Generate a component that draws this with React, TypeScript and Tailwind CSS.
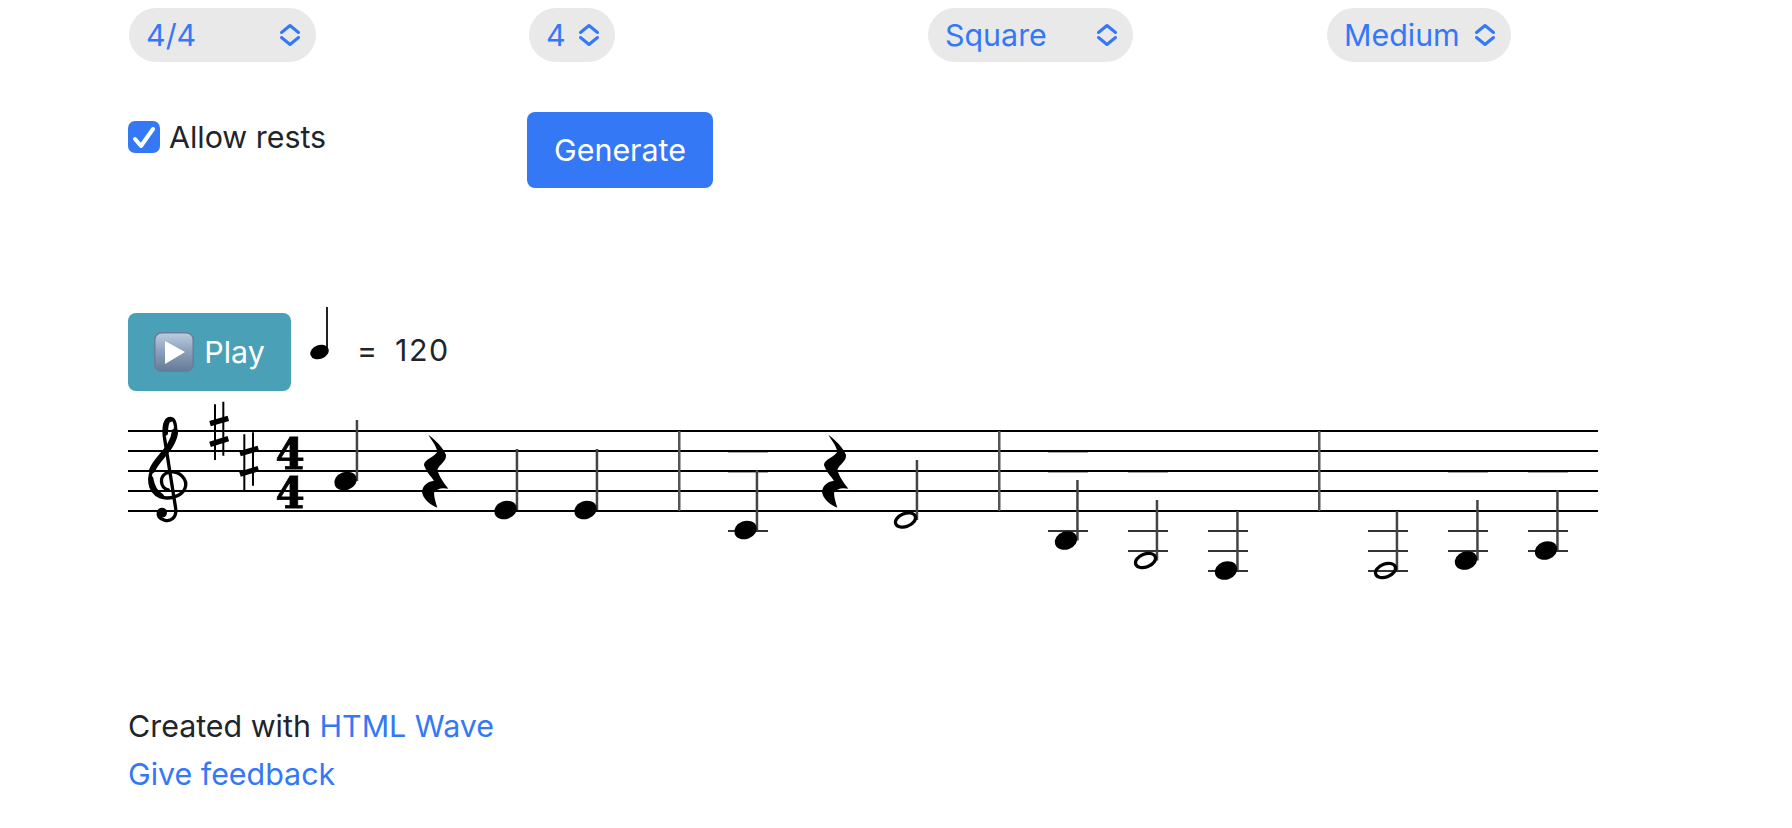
import React from "react";

const staffLines = [431, 451, 471, 491, 511];
const barLines = [679, 999, 1319];

type Note = {
  x: number;
  y: number;
  stemTop: number;
  hollow?: boolean;
  ledgerX?: number;
  ledgers?: number[];
};

const notes: Note[] = [
  { x: 345.5, y: 481, stemTop: 420 },
  { x: 505.5, y: 510, stemTop: 449 },
  { x: 585.5, y: 510, stemTop: 449 },
  { x: 745.5, y: 530, stemTop: 470, ledgerX: 728, ledgers: [452, 472, 491, 511, 531] },
  { x: 905.5, y: 520, stemTop: 460, hollow: true },
  { x: 1066, y: 540.5, stemTop: 480, ledgerX: 1048, ledgers: [452, 472, 491, 511, 531] },
  { x: 1145.5, y: 560.5, stemTop: 500, hollow: true, ledgerX: 1128, ledgers: [472, 491, 511, 531, 551] },
  { x: 1226, y: 570.5, stemTop: 511, ledgerX: 1208, ledgers: [491, 511, 531, 551, 571] },
  { x: 1385.5, y: 570.5, stemTop: 511, hollow: true, ledgerX: 1368, ledgers: [491, 511, 531, 551, 571] },
  { x: 1466, y: 560.5, stemTop: 500, ledgerX: 1448, ledgers: [472, 491, 511, 531, 551] },
  { x: 1546, y: 550.5, stemTop: 490, ledgerX: 1528, ledgers: [472, 491, 511, 531, 551] },
];

const restPath =
  "M205 74 C225 90 250 112 258 135 C260 155 238 162 232 180 C238 200 252 220 265 236 C245 232 230 236 222 248 C222 262 228 280 232 293 C210 285 188 265 186 245 C188 225 205 214 222 212 C214 200 200 188 192 165 C192 148 222 142 232 125 C228 105 214 90 205 74 Z";

function Chevrons() {
  return (
    <svg width="22" height="24" viewBox="0 0 22 24" fill="none" className="shrink-0">
      <path
        d="M2.5 9.5 L11 2.5 L19.5 9.5 M2.5 14.5 L11 21.5 L19.5 14.5"
        stroke="#3478f6"
        strokeWidth="3"
        strokeLinecap="round"
        strokeLinejoin="round"
      />
    </svg>
  );
}

function Select({ label, width }: { label: string; width: string }) {
  return (
    <button
      type="button"
      className={`flex h-[54px] items-center justify-between rounded-[27px] bg-[#e9e9e9] pl-[17px] pr-[15px] text-[30.4px] text-[#3478f6] ${width}`}
    >
      <span className="pt-[2px]">{label}</span>
      <Chevrons />
    </button>
  );
}

function PlayEmoji() {
  return (
    <svg width="40" height="40" viewBox="0 0 40 40" className="shrink-0">
      <defs>
        <linearGradient id="playBg" x1="0" y1="0" x2="0" y2="1">
          <stop offset="0" stopColor="#bccde0" />
          <stop offset="0.5" stopColor="#8a9fb9" />
          <stop offset="1" stopColor="#647a96" />
        </linearGradient>
      </defs>
      <rect x="0.75" y="0.75" width="38.5" height="38.5" rx="7" fill="url(#playBg)" stroke="#6a7d96" strokeWidth="1.5" />
      <path d="M11 9 L31 20 L11 32 Z" fill="#fff" strokeLinejoin="round" />
    </svg>
  );
}

function Score() {
  return (
    <svg width="1472" height="205" viewBox="128 395 1472 205" className="block">
      <defs>
        <filter id="soft" x="-10%" y="-10%" width="120%" height="120%">
          <feGaussianBlur stdDeviation="0.6" />
        </filter>
      </defs>

      {/* ledger lines sit under the staff */}
      {notes.map((n) =>
        (n.ledgers || []).map((y) => (
          <rect
            key={`${n.x}-${y}`}
            x={n.ledgerX}
            y={y - 1}
            width="40"
            height="2"
            fill={y > 520 ? "#333" : "#aaa"}
          />
        ))
      )}

      {staffLines.map((y) => (
        <rect key={y} x="128" y={y - 1} width="1470" height="2" fill="#000" />
      ))}
      {barLines.map((x) => (
        <rect key={x} x={x - 1} y="431" width="2.5" height="80" fill="#555" />
      ))}

      {notes.map((n) => (
        <rect key={n.x} x={n.x + 10.2} y={n.stemTop} width="2.5" height={n.y - n.stemTop} fill="#444" />
      ))}

      <g filter="url(#soft)">
        {/* treble clef */}
        <g transform="translate(125 395) scale(0.3333)" fill="none" stroke="#000" strokeLinecap="round">
          <path
            d="M130 285 C105 280 100 240 130 232 C165 225 190 255 180 280 C170 305 130 315 105 305 C70 290 65 245 90 210 C110 180 152 150 152 105 C152 80 145 70 135 70 C120 70 115 95 118 125 L152 340 C156 370 135 380 120 376 C105 372 97 365 100 352"
            strokeWidth="10"
          />
          <path d="M82 225 C95 190 145 160 150 110" strokeWidth="19" />
          <path d="M78 250 C82 275 95 295 110 303" strokeWidth="14" />
          <path d="M135 75 C125 75 122 95 122 115" strokeWidth="14" />
          <circle cx="111" cy="353" r="15" fill="#000" stroke="none" />
        </g>

        {/* key signature */}
        <g transform="translate(125 395) scale(0.3333)" stroke="#000">
          <path d="M270 28 V195 M295 20 V182 M358 118 V285 M384 112 V272" strokeWidth="6" fill="none" />
          <path d="M255 86 L310 70 M255 148 L310 131 M345 176 L400 160 M345 238 L400 221" strokeWidth="16" fill="none" />
        </g>

        {/* time signature */}
        <text x="290" y="469" textAnchor="middle" fontSize="42" fontWeight="700" fill="#000" stroke="#000" strokeWidth="0.8" fontFamily="'DejaVu Serif', serif">
          4
        </text>
        <text x="290" y="508" textAnchor="middle" fontSize="42" fontWeight="700" fill="#000" stroke="#000" strokeWidth="0.8" fontFamily="'DejaVu Serif', serif">
          4
        </text>

        {/* quarter rests */}
        <path d={restPath} transform="translate(360 410) scale(0.3333)" fill="#000" />
        <path d={restPath} transform="translate(760 410) scale(0.3333)" fill="#000" />

        {notes.map((n) =>
          n.hollow ? (
            <ellipse
              key={n.x}
              cx={n.x}
              cy={n.y}
              rx="10.5"
              ry="6.5"
              fill="none"
              stroke="#000"
              strokeWidth="3.2"
              transform={`rotate(-22 ${n.x} ${n.y})`}
            />
          ) : (
            <ellipse
              key={n.x}
              cx={n.x}
              cy={n.y}
              rx="11.5"
              ry="9"
              fill="#000"
              transform={`rotate(-20 ${n.x} ${n.y})`}
            />
          )
        )}
      </g>
    </svg>
  );
}

export default function App() {
  return (
    <div className="min-h-[828px] bg-white pl-[128px] pt-2 font-['Inter','Liberation_Sans',sans-serif] text-[30.4px] text-[#212529]">
      <div className="grid w-[1600px] grid-cols-4">
        <div className="ml-[1px]"><Select label="4/4" width="w-[187px]" /></div>
        <div className="ml-[1px]"><Select label="4" width="w-[86px]" /></div>
        <div><Select label="Square" width="w-[205px]" /></div>
        <div className="-ml-[1px]"><Select label="Medium" width="w-[184px]" /></div>
      </div>

      <div className="mt-[50px] grid w-[1600px] grid-cols-4">
        <label className="flex h-[76px] items-start gap-[9px] pt-[9px]">
          <span className="flex h-[32px] w-[32px] items-center justify-center rounded-[7px] bg-[#3478f6]">
            <svg width="32" height="32" viewBox="0 0 32 32" fill="none">
              <path d="M7 18 L13 25 L25 8" stroke="#fff" strokeWidth="4" strokeLinecap="round" strokeLinejoin="round" />
            </svg>
          </span>
          <span className="leading-[32px]">Allow rests</span>
        </label>
        <div className="-ml-[1px]">
          <button
            type="button"
            className="h-[76px] w-[186px] rounded-[8px] bg-[#3478f6] pt-[2px] text-[30.4px] text-white"
          >
            Generate
          </button>
        </div>
      </div>

      <div className="mt-[118px] flex h-[89px] items-start">
        <button
          type="button"
          className="mt-[7px] flex h-[78px] w-[163px] items-center justify-center gap-[10px] rounded-[8px] bg-[#4aa0b6] text-[30.4px] text-white"
        >
          <PlayEmoji />
          <span className="pt-[2px]">Play</span>
        </button>
        <svg width="24" height="56" viewBox="0 0 24 56" className="ml-[19px] mt-[1px] shrink-0">
          <rect x="16" y="0" width="2" height="45" fill="#222" />
          <ellipse cx="9.5" cy="45" rx="9.5" ry="7" fill="#000" transform="rotate(-20 9.5 45)" />
        </svg>
        <span className="ml-[23px] mt-[24px] leading-[40px]">=</span>
        <span className="ml-[18px] mt-[24px] leading-[40px] tracking-[1.5px]">120</span>
      </div>

      <Score />

      <div className="mt-[102px] leading-[48px]">
        <div>
          Created with <a href="#" className="text-[#3478f6]">HTML Wave</a>
        </div>
        <div>
          <a href="#" className="text-[#3478f6]">Give feedback</a>
        </div>
      </div>
    </div>
  );
}
